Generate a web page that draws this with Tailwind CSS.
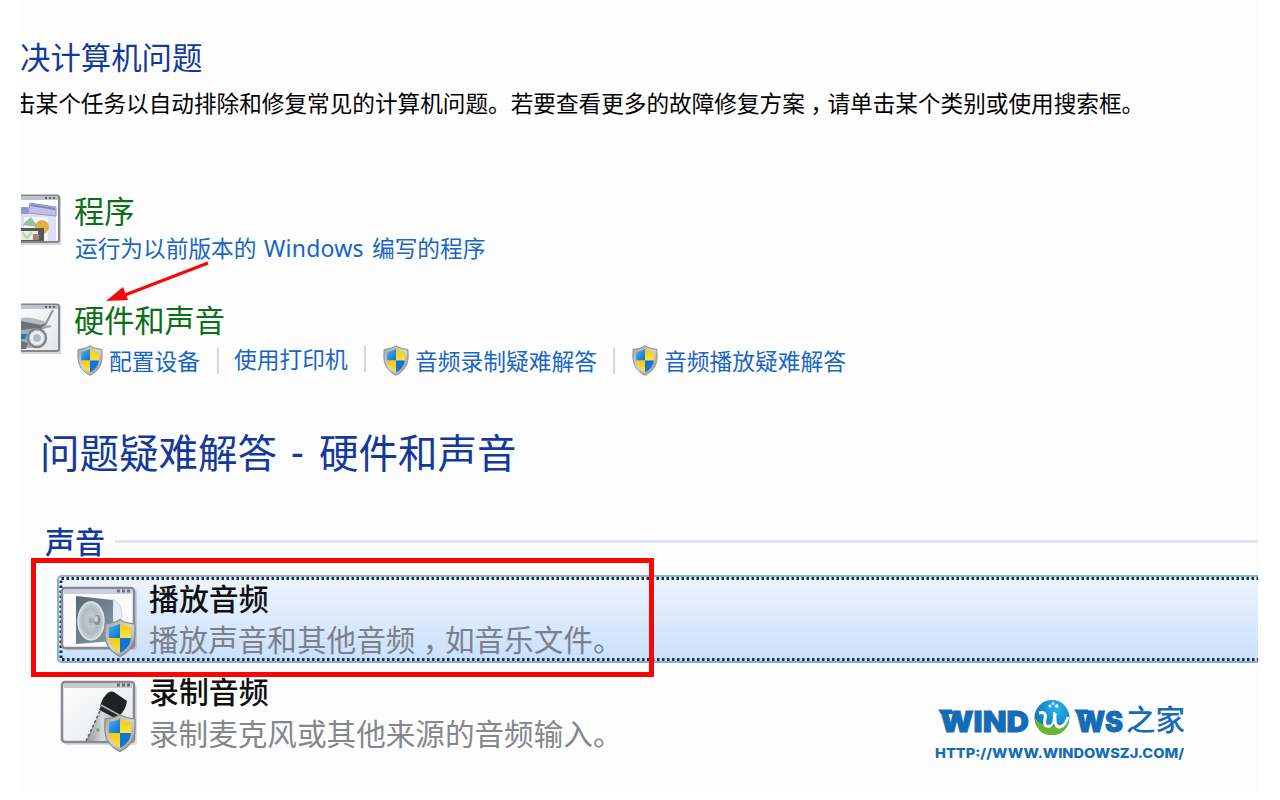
<!DOCTYPE html>
<html lang="zh-CN">
<head>
<meta charset="utf-8">
<title>问题疑难解答</title>
<script src="https://cdn.jsdelivr.net/npm/@tailwindcss/browser@4"></script>
</head>
<body class="bg-white">
<svg width="0" height="0" class="absolute">
  <defs>
    <linearGradient id="rim" x1="0" y1="0" x2="1" y2="1"><stop offset="0" stop-color="#a2a5a6"/><stop offset=".5" stop-color="#d5d5d3"/><stop offset="1" stop-color="#858789"/></linearGradient>
    <linearGradient id="blu" x1="0" y1="0" x2="1" y2="1"><stop offset="0" stop-color="#4db0ee"/><stop offset="1" stop-color="#096fd0"/></linearGradient>
    <linearGradient id="yel" x1="0" y1="0" x2="0" y2="1"><stop offset="0" stop-color="#f7c90a"/><stop offset="1" stop-color="#fbe04c"/></linearGradient>
    <linearGradient id="pane" x1="0" y1="0" x2="1" y2="1"><stop offset="0" stop-color="#fff"/><stop offset="1" stop-color="#e3e5e7"/></linearGradient>
    <linearGradient id="spk" x1="0" y1="0" x2="1" y2="1"><stop offset="0" stop-color="#566975"/><stop offset="1" stop-color="#8799a5"/></linearGradient>
    <linearGradient id="mic" x1="0" y1="0" x2="1" y2="0"><stop offset="0" stop-color="#8f9193"/><stop offset=".5" stop-color="#d8d9da"/><stop offset="1" stop-color="#a2a4a6"/></linearGradient>
    <radialGradient id="cone"><stop offset="0" stop-color="#9aa5ad"/><stop offset=".3" stop-color="#c3cbd1"/><stop offset=".65" stop-color="#b0bac2"/><stop offset="1" stop-color="#cdd5da"/></radialGradient>
    <radialGradient id="globe" cx=".65" cy=".25" r=".8"><stop offset="0" stop-color="#25b6ea"/><stop offset="1" stop-color="#0c69b5"/></radialGradient>
    <symbol id="shield" viewBox="0 0 27 31">
      <path d="M13.500 .8C10 3.200 6 4 1.700 4.300C.8 15 1.200 24 13.500 30.300C25.800 24 26.200 15 25.300 4.300C21 4 17 3.200 13.500 .8Z" fill="url(#rim)" stroke="#8b8c8c" stroke-width="1"/>
      <path d="M13.500 4C10.500 5.700 8 6.400 5 6.800Q4.300 11 4.700 15.500H13.500Z" fill="url(#blu)"/>
      <path d="M13.500 4C16.500 5.700 19 6.400 22 6.800Q22.700 11 22.300 15.500H13.500Z" fill="url(#yel)"/>
      <path d="M4.700 15.500H13.500V27.300C8 24.300 5.500 21 4.700 15.500Z" fill="url(#yel)"/>
      <path d="M22.300 15.500H13.500V27.300C19 24.300 21.500 21 22.300 15.500Z" fill="#1274d3"/>
    </symbol>
  </defs>
</svg>
<main class="relative ml-[21px] w-[1237px] h-[792px] overflow-hidden bg-[#fdfdfd] flex flex-col font-['Noto_Sans_CJK_SC',sans-serif] whitespace-nowrap">
  <h1 class="mt-[36px] -ml-px h-10 leading-10 text-[30.400px] text-[#14399c]">决计算机问题</h1>
  <p class="mt-[12px] -ml-[8px] h-[30px] leading-[30px] text-[22.630px] text-black">击某个任务以自动排除和修复常见的计算机问题。若要查看更多的故障修复方案<span class="inline-block w-[1em] text-center [font-feature-settings:'halt']">，</span>请单击某个类别或使用搜索框。</p>

  <section class="mt-[72px] h-[76px] flex">
    <svg class="mt-[4px] shrink-0" width="43" height="54" viewBox="0 0 43 54">
      <path d="M-4 3H40V51H-4Z" fill="#d5d7d9"/>
      <rect x="-4" y="1.500" width="42" height="46.500" rx="2" fill="#fff" stroke="#84878d" stroke-width="2"/>
      <path d="M0 3H37V6H0Z" fill="#bfc4cb"/><path d="M24 4H35" stroke="#596273" stroke-width="2" stroke-dasharray="2 2"/>
      <path d="M0 13H9V10L35 13V47H0Z" fill="#dedff2"/>
      <path d="M9 9L35 13V22L7 19Z" fill="#bfc0e8" stroke="#9294c5"/>
      <path d="M0 13H7V20H0Z" fill="#9396c7"/><path d="M10 10L34 14V16L9 12Z" fill="#8184bd"/>
      <path d="M3 23H27V47H3Z" fill="#f5f6fa"/>
      <path d="M1 31L10 23L17 33Z" fill="#96c4a0"/><circle cx="21" cy="33" r="7" fill="#e7ae45"/>
      <path d="M0 34H23V47H0Z" fill="#55595e"/><path d="M0 37H17V46H0Z" fill="#e9eedf"/>
      <path d="M1 38L6 44L11 38" stroke="#b5d5ad" stroke-width="2" fill="none"/><path d="M12 40H18V46H12Z" fill="#aa8175"/>
    </svg>
    <div class="ml-[10px]">
      <h2 class="h-10 leading-10 text-[30.300px] text-[#0b6f18]">程序</h2>
      <p class="ml-px mt-[2px] h-8 leading-8 text-[22.700px] text-[#1965c6] flex"><span class="w-[189px]">运行为以前版本的</span><span class="w-[108px] font-['Noto_Sans',sans-serif] text-[23px] tracking-[.2px]">Windows</span><span>编写的程序</span></p>
    </div>
  </section>

  <section class="mt-[33px] h-[82px] flex">
    <svg class="mt-[4px] shrink-0" width="43" height="54" viewBox="0 0 43 54">
      <path d="M-4 3H40V51H-4Z" fill="#d5d7d9"/>
      <rect x="-4" y="1.500" width="42" height="46.500" rx="2" fill="url(#pane)" stroke="#84878d" stroke-width="2"/>
      <path d="M0 3H37V6H0Z" fill="#bfc4cb"/><path d="M24 4H35" stroke="#596273" stroke-width="2" stroke-dasharray="2 2"/>
      <path d="M0 18Q10 14 25 21L20 28H0Z" fill="#6c7277"/>
      <path d="M0 15Q10 13 25 19L20 22L0 18Z" fill="#b8bcc0"/>
      <path d="M0 27L15 25L13 45H0Z" fill="#a5abb0"/><path d="M0 31H6L4 36H0Z" fill="#167bc5"/><path d="M0 38L7 40L5 46H0Z" fill="#6d747a"/>
      <path d="M32 7L22 26" stroke="#8f9498" stroke-width="2"/><path d="M21 25L30 23" stroke="#a5a9ac" stroke-width="2"/>
      <circle cx="16" cy="35" r="9" fill="#dfe4e8" stroke="#7b868e" stroke-width="2.500"/><circle cx="16" cy="35" r="5" fill="#aebbc5" stroke="#eef1f4" stroke-width="2"/>
    </svg>
    <div class="ml-[10px]">
      <h2 class="h-10 leading-10 text-[30.200px] text-[#0b6f18]">硬件和声音</h2>
      <div class="ml-[2px] mt-[2px] h-9 flex items-center text-[22.750px] leading-9 text-[#1965c6]">
        <svg class="mt-[3px]" width="28" height="31"><use href="#shield"/></svg><span class="ml-[5px] mt-[3px] w-[108px]">配置设备</span>
        <i class="mt-[4px] w-[2px] h-[26px] bg-[#d4d6d8] mr-[15px]"></i><span class="w-[130px]">使用打印机</span>
        <i class="w-[2px] h-[26px] bg-[#d4d6d8] mr-[16px]"></i><svg class="mt-[3px]" width="28" height="31"><use href="#shield"/></svg><span class="ml-[5px] mt-[3px] w-[198px]">音频录制疑难解答</span>
        <i class="mt-[4px] w-[2px] h-[26px] bg-[#d4d6d8] mr-[16px]"></i><svg class="mt-[3px]" width="28" height="31"><use href="#shield"/></svg><span class="ml-[5px] mt-[3px]">音频播放疑难解答</span>
      </div>
    </div>
  </section>

  <h1 class="mt-[46px] ml-[19px] h-12 leading-[48px] text-[39.500px] text-[#14399c] flex"><span class="w-[251px]">问题疑难解答</span><span class="w-[28px] font-['Noto_Sans',sans-serif]">-</span><span>硬件和声音</span></h1>
  <div class="mt-[46px] ml-6 h-[38px] flex items-center">
    <h3 class="leading-[38px] text-[30px] font-medium text-[#14399c]">声音</h3>
    <i class="ml-[10px] mt-[2px] flex-1 h-[3px] bg-[#dfe6f0]"></i>
  </div>

  <div class="mt-[16px] ml-[36px] h-[88px] shrink-0 rounded-l-[5px] border-2 border-r-0 border-[#88aeda] bg-linear-to-b from-[#edf5fe] to-[#c9dffc] relative flex">
    <svg class="absolute inset-0 w-full h-full"><path d="M1300 1.500H2V82.500H1300" fill="none" stroke="#202c3c" stroke-width="3" stroke-dasharray="2.500 2.500"/></svg>
    <svg class="relative ml-[1px] mt-[7px] shrink-0" width="82" height="76" viewBox="0 0 82 76">
      <rect x="4" y="6" width="73" height="60" rx="3" fill="#8c9cae" opacity=".4"/>
      <rect x="2" y="4" width="72" height="60" rx="3" fill="#fafafa" stroke="#858a92" stroke-width="2.500"/>
      <path d="M4 5H72V10H4Z" fill="#c7d0dc"/><path d="M57 7H70" stroke="#647990" stroke-width="3" stroke-dasharray="3 2"/>
      <path d="M53 15Q62 19 62 33L52 43Z" fill="#e3ecf8" stroke="#c6d3e4"/>
      <path d="M16 12L53 16V57L16 60Z" fill="url(#spk)"/>
      <ellipse cx="31" cy="37" rx="13" ry="19" fill="url(#cone)" stroke="#dfe4e8" stroke-width="1.500"/>
      <ellipse cx="37" cy="36" rx="3.500" ry="5" fill="#858f97"/><ellipse cx="36" cy="35" rx="2" ry="3" fill="#cdd4d9"/>
      <use href="#shield" x="43" y="34" width="34" height="40"/>
    </svg>
    <div class="relative ml-[7px]">
      <p class="h-10 leading-10 text-[29.900px] font-medium text-[#111]">播放音频</p>
      <p class="mt-[2px] h-10 leading-10 text-[29.600px] text-[#7b818a]">播放声音和其他音频<span class="inline-block w-[1em] text-center [font-feature-settings:'halt']">，</span>如音乐文件。</p>
    </div>
  </div>
  <div class="mt-[7px] ml-[36px] h-[90px] shrink-0 flex">
    <svg class="ml-[3px] mt-[9px] shrink-0" width="82" height="76" viewBox="0 0 82 76">
      <rect x="4" y="6" width="73" height="60" rx="3" fill="#dcdcdd"/>
      <rect x="2" y="3" width="72" height="60" rx="3" fill="url(#pane)" stroke="#858a92" stroke-width="2.500"/>
      <path d="M4 4H72V9H4Z" fill="#c7cbd1"/><path d="M57 6H70" stroke="#63676d" stroke-width="3" stroke-dasharray="3 2"/>
      <path d="M26 62L41 30L59 37L49 62Z" fill="url(#mic)"/><path d="M26 62L41 30" stroke="#5f6264" stroke-width="1.500" stroke-dasharray="3 2"/>
      <path d="M49 13Q52 12 54 13L67 22Q66 31 59 37L40 27Q43 17 49 13Z" fill="#202224"/><path d="M41 26L59 36" stroke="#b5b7b8" stroke-width="1.500"/><path d="M40 29L57 38" stroke="#252729" stroke-width="4"/>
      <circle cx="38" cy="51" r="1.800" fill="#51bc57"/>
      <use href="#shield" x="43" y="34" width="34" height="40"/>
    </svg>
    <div class="ml-[7px]">
      <p class="h-10 leading-10 text-[29.900px] font-medium text-[#111]">录制音频</p>
      <p class="mt-[3px] h-10 leading-10 text-[29.600px] text-[#85878a]">录制麦克风或其他来源的音频输入。</p>
    </div>
  </div>

  <svg class="absolute left-[85px] top-[255px]" width="110" height="55" viewBox="106 255 110 55"><path d="M208 263L125 295" stroke="#f80606" stroke-width="3"/><path d="M106 301L123 287L128 300Z" fill="#f80606"/></svg>
  <div class="absolute left-[10px] top-[558px] w-[623px] h-[119px] border-[5px] border-[#fa0505]"></div>

  <svg class="absolute left-[909px] top-[690px]" width="270" height="80" viewBox="930 690 270 80" fill="#146cb6">
    <text x="940" y="731.500" font-family="Inter" font-weight="900" font-size="29" textLength="89" lengthAdjust="spacingAndGlyphs" stroke="#146cb6" stroke-width=".8">WIND</text>
    <path d="M938 709.500H952L954 714H941Z"/>
    <circle cx="1052" cy="717.500" r="17.500" fill="url(#globe)"/>
    <path d="M1034.500 717Q1044 732 1069 722Q1065 735 1052 735Q1036 735 1034.500 717Z" fill="#68b52e"/>
    <path d="M1039 713Q1047 711 1045 719Q1043 728 1050 726" fill="none" stroke="#fff" stroke-width="3"/>
    <path d="M1055 713Q1054 728 1060 727Q1066 725 1068 717" fill="none" stroke="#fff" stroke-width="3"/>
    <path d="M1049 727Q1055 725 1054 712" fill="none" stroke="#fff" stroke-width="2"/>
    <circle cx="1050" cy="706" r="1.500" fill="#fff"/><circle cx="1053" cy="703.500" r="1.300" fill="#fff"/><circle cx="1056.500" cy="706" r="1.800" fill="#fff"/>
    <text x="1076" y="731.500" font-family="Inter" font-weight="900" font-size="29" textLength="47" lengthAdjust="spacingAndGlyphs" stroke="#146cb6" stroke-width=".8">WS</text>
    <path d="M1074 709.500H1088L1090 714H1077Z"/>
    <text x="1126" y="731" font-family="Noto Sans CJK SC" font-weight="500" font-size="29" textLength="59" lengthAdjust="spacingAndGlyphs">之家</text>
    <text x="935" y="757.500" font-family="Inter" font-weight="800" font-size="13.500" textLength="249" lengthAdjust="spacingAndGlyphs">HTTP://WWW.WINDOWSZJ.COM/</text>
  </svg>
</main>
</body>
</html>
